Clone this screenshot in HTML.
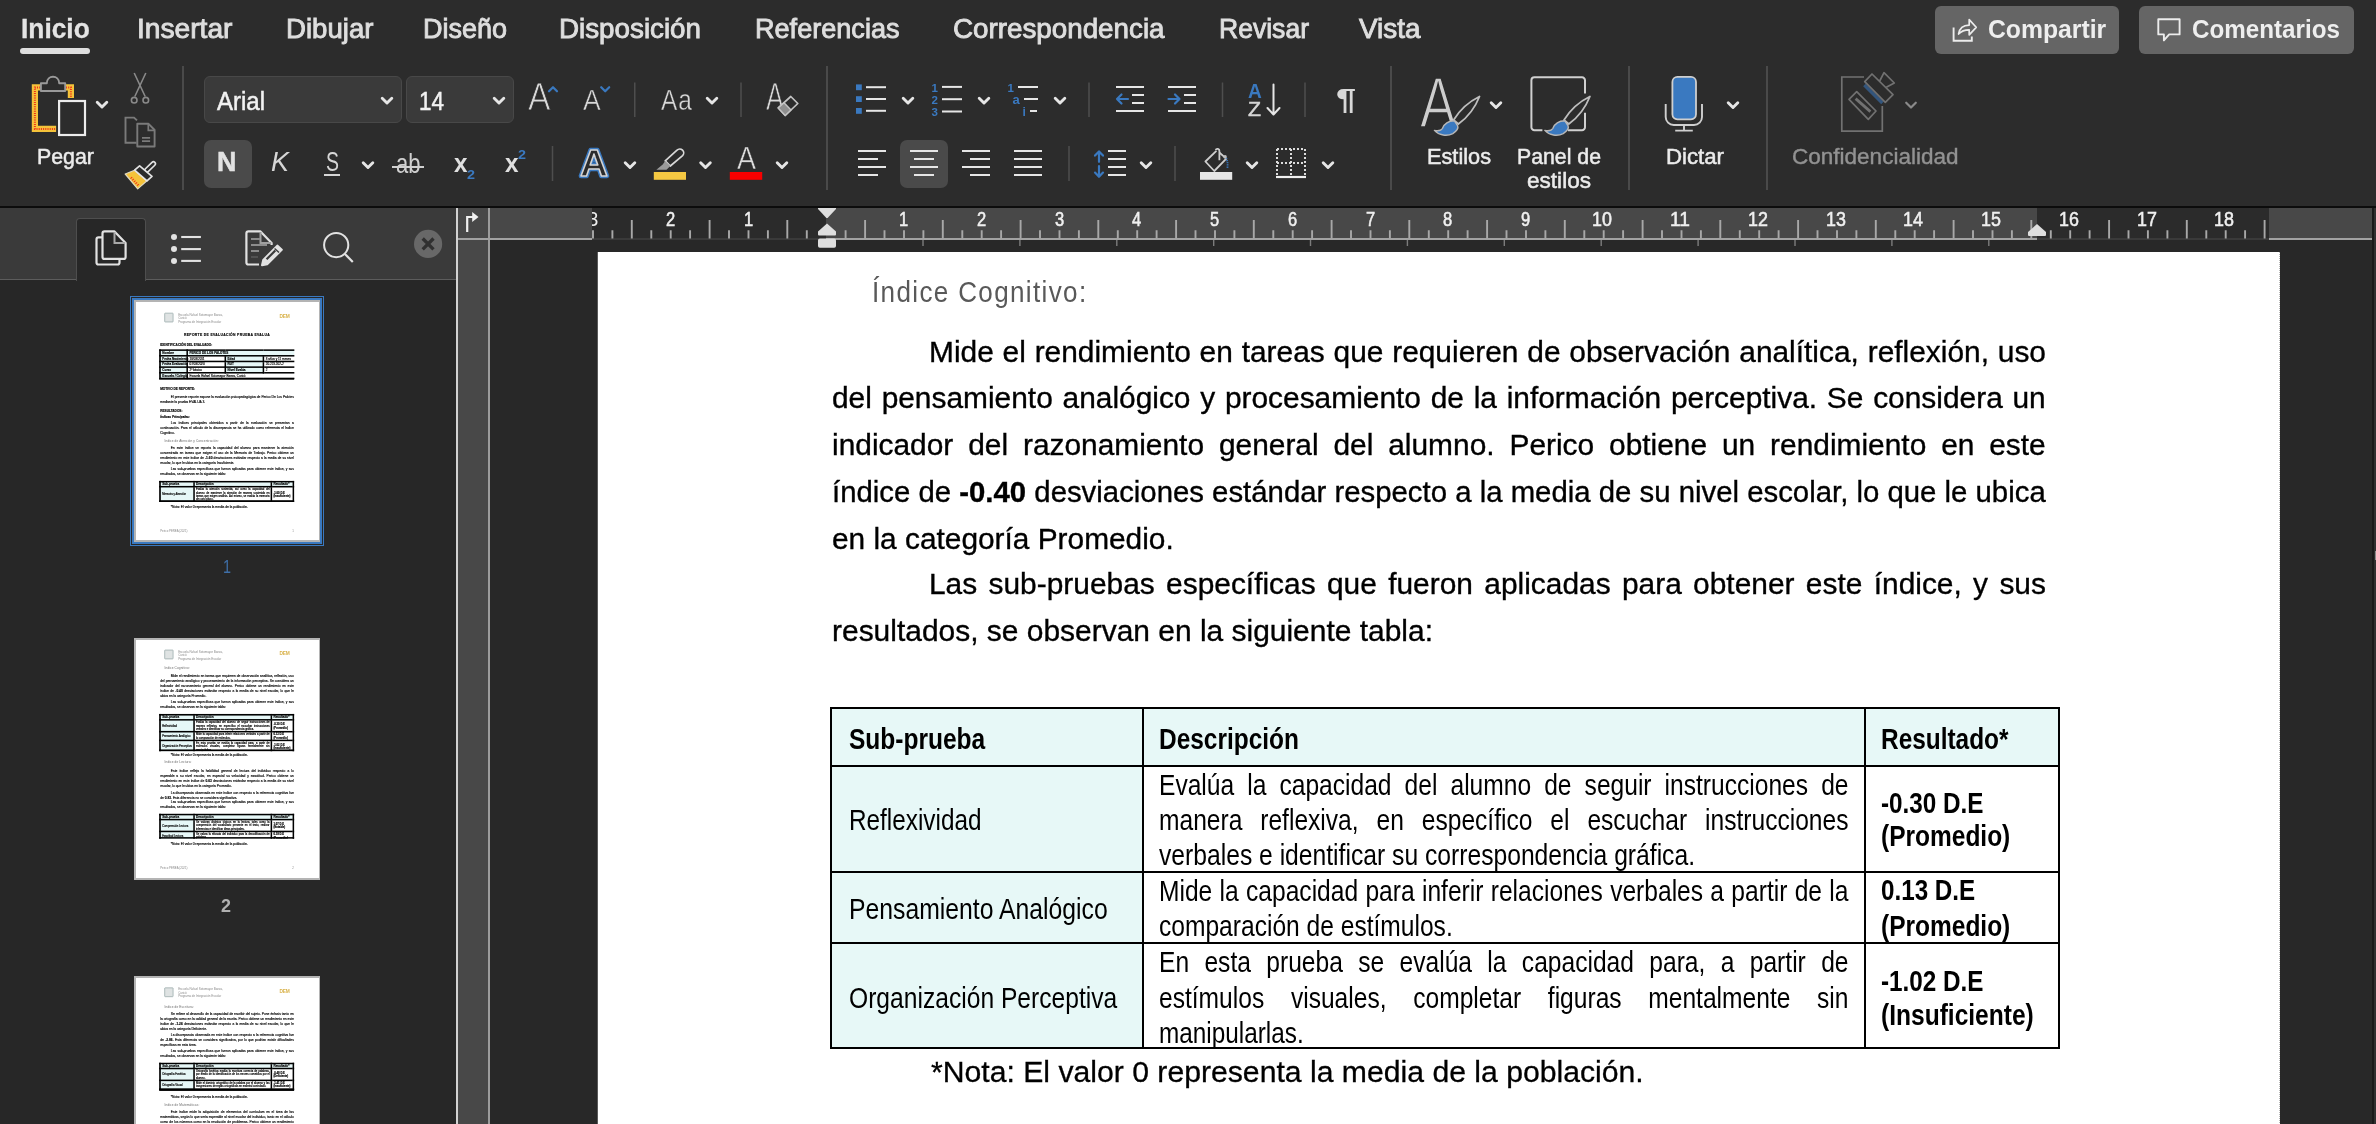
<!DOCTYPE html>
<html lang="es"><head><meta charset="utf-8"><title>Documento</title>
<style>

*{box-sizing:border-box;margin:0;padding:0}
html,body{width:2376px;height:1124px;overflow:hidden;background:#262626}
body{font-family:"Liberation Sans",sans-serif;}
#app{position:relative;width:2376px;height:1124px;overflow:hidden;background:#262626;will-change:transform}
.t{position:absolute;white-space:nowrap;transform-origin:0 50%;}
.a{position:absolute}
.d{color:#000}
svg{position:absolute;overflow:visible}

.mp{position:absolute;left:0;top:0;width:1681px;height:2190px;transform:scale(0.1089);transform-origin:0 0;font-size:30px;line-height:46px;color:#000;text-align:justify;background:#fff;-webkit-text-stroke:1.2px #000}
.b{position:absolute;left:222px;width:1227px}
.b.p{text-indent:98px}
.b.h1{font-size:31px;letter-spacing:3px;text-align:center;font-weight:bold}
.b.h2{font-size:29px;font-weight:bold}
.b.it{font-style:italic}
.b.h3{font-size:29px;color:#6a6a6a;padding-left:40px;letter-spacing:1px;-webkit-text-stroke:0}
.b.mh{height:110px;color:#8a8a8a;font-size:27px;line-height:32px;text-align:left;-webkit-text-stroke:0}
.mh span{position:absolute;left:165px;top:6px}
.mh .lg{position:absolute;left:38px;top:4px;width:84px;height:88px;border:7px solid #9aa;border-radius:8px;background:#dfe3e3}
.mh .dm{position:absolute;right:40px;top:22px;font-size:44px;color:#d9b24a;letter-spacing:-2px}
.b.tb{left:212px;width:1242px}
.mt{border-collapse:collapse;table-layout:fixed;width:1242px;border:16px solid #000;font-size:28px;line-height:34px;text-align:left}
.mt th,.mt td{border:14px solid #000;padding:1px 12px;vertical-align:middle;white-space:nowrap}
.mt th{background:#e6f7f7;text-align:left;line-height:30px}
.mt .c1{background:#e6f7f7}
.mt td.c2{text-align:justify;line-height:31px;font-size:24.5px;white-space:normal;padding:1px 10px}
.mt .c3{font-weight:bold;font-size:25px;line-height:32px}
.mt .c1{font-size:25px}
.mt.id th,.mt.id td{line-height:30px;padding:6px 14px 2px}
.mt.id{border-bottom:none;width:1316px}
.cl{position:absolute;left:0;bottom:0;width:100%;height:16px;background:#000}
.b.mf{display:flex;justify-content:space-between;color:#888;font-size:26px;-webkit-text-stroke:0}

</style></head>
<body>
<div id="app">
<div class="a" style="left:0;top:0;width:2376px;height:207px;background:#2c2c2c"></div>
<div class="a" style="left:0;top:206px;width:2376px;height:2.2px;background:#0c0c0c"></div>
<div class="a" style="left:20px;top:48px;width:70px;height:6px;border-radius:3px;background:#dedede"></div>
<div class="t" style="left:20.75px;top:10.71px;line-height:36px;font-size:27.4px;font-weight:bold;font-style:normal;letter-spacing:0px;color:#e4e4e4;-webkit-text-stroke:0.3px #e4e4e4;transform:scaleX(0.9611);">Inicio</div>
<div class="t" style="left:137.00px;top:10.71px;line-height:36px;font-size:27.4px;font-weight:normal;font-style:normal;letter-spacing:0px;color:#dedede;-webkit-text-stroke:0.9px #dedede;transform:scaleX(1.0284);">Insertar</div>
<div class="t" style="left:285.50px;top:10.71px;line-height:36px;font-size:27.4px;font-weight:normal;font-style:normal;letter-spacing:0px;color:#dedede;-webkit-text-stroke:0.9px #dedede;transform:scaleX(1.0083);">Dibujar</div>
<div class="t" style="left:423.00px;top:10.71px;line-height:36px;font-size:27.4px;font-weight:normal;font-style:normal;letter-spacing:0px;color:#dedede;-webkit-text-stroke:0.9px #dedede;transform:scaleX(0.9852);">Diseño</div>
<div class="t" style="left:559.00px;top:10.71px;line-height:36px;font-size:27.4px;font-weight:normal;font-style:normal;letter-spacing:0px;color:#dedede;-webkit-text-stroke:0.9px #dedede;transform:scaleX(1.0138);">Disposición</div>
<div class="t" style="left:755.00px;top:10.71px;line-height:36px;font-size:27.4px;font-weight:normal;font-style:normal;letter-spacing:0px;color:#dedede;-webkit-text-stroke:0.9px #dedede;transform:scaleX(0.9887);">Referencias</div>
<div class="t" style="left:953.00px;top:10.71px;line-height:36px;font-size:27.4px;font-weight:normal;font-style:normal;letter-spacing:0px;color:#dedede;-webkit-text-stroke:0.9px #dedede;transform:scaleX(1.0139);">Correspondencia</div>
<div class="t" style="left:1219.00px;top:10.71px;line-height:36px;font-size:27.4px;font-weight:normal;font-style:normal;letter-spacing:0px;color:#dedede;-webkit-text-stroke:0.9px #dedede;transform:scaleX(0.9692);">Revisar</div>
<div class="t" style="left:1359.00px;top:10.71px;line-height:36px;font-size:27.4px;font-weight:normal;font-style:normal;letter-spacing:0px;color:#dedede;-webkit-text-stroke:0.9px #dedede;transform:scaleX(1.0181);">Vista</div>
<div class="a" style="left:1935px;top:6px;width:184px;height:48px;border-radius:6px;background:#656565"></div>
<div class="a" style="left:2139px;top:6px;width:215px;height:48px;border-radius:6px;background:#656565"></div>
<div class="t" style="left:1987.75px;top:12.66px;line-height:33px;font-size:25.5px;font-weight:bold;font-style:normal;letter-spacing:0px;color:#eeeeee;transform:scaleX(0.9704);">Compartir</div>
<div class="t" style="left:2192.00px;top:12.66px;line-height:33px;font-size:25.5px;font-weight:bold;font-style:normal;letter-spacing:0px;color:#eeeeee;transform:scaleX(0.9495);">Comentarios</div>
<div class="t" style="left:37.00px;top:141.88px;line-height:29px;font-size:22px;font-weight:normal;font-style:normal;letter-spacing:0px;color:#ececec;-webkit-text-stroke:0.5px #ececec;transform:scaleX(0.9707);">Pegar</div>
<div class="t" style="left:1427.00px;top:141.88px;line-height:29px;font-size:22px;font-weight:normal;font-style:normal;letter-spacing:0px;color:#ececec;-webkit-text-stroke:0.5px #ececec;transform:scaleX(0.9877);">Estilos</div>
<div class="t" style="left:1517.00px;top:141.88px;line-height:29px;font-size:22px;font-weight:normal;font-style:normal;letter-spacing:0px;color:#ececec;-webkit-text-stroke:0.5px #ececec;transform:scaleX(0.9671);">Panel de</div>
<div class="t" style="left:1527.00px;top:165.88px;line-height:29px;font-size:22px;font-weight:normal;font-style:normal;letter-spacing:0px;color:#ececec;-webkit-text-stroke:0.5px #ececec;transform:scaleX(1.0263);">estilos</div>
<div class="t" style="left:1666.00px;top:141.88px;line-height:29px;font-size:22px;font-weight:normal;font-style:normal;letter-spacing:0px;color:#ececec;-webkit-text-stroke:0.5px #ececec;transform:scaleX(1.0095);">Dictar</div>
<div class="t" style="left:1791.50px;top:141.88px;line-height:29px;font-size:22px;font-weight:normal;font-style:normal;letter-spacing:0px;color:#929292;-webkit-text-stroke:0.4px #929292;transform:scaleX(1.0235);">Confidencialidad</div>
<div class="a" style="left:204px;top:76px;width:198px;height:47px;border-radius:6px;background:#3a3a3a;border:1px solid #484848"></div>
<div class="a" style="left:406px;top:76px;width:108px;height:47px;border-radius:6px;background:#3a3a3a;border:1px solid #484848"></div>
<div class="t" style="left:217.00px;top:84.66px;line-height:33px;font-size:25.5px;font-weight:normal;font-style:normal;letter-spacing:0px;color:#f2f2f2;-webkit-text-stroke:0.5px #f2f2f2;transform:scaleX(0.9409);">Arial</div>
<div class="t" style="left:419.00px;top:84.66px;line-height:33px;font-size:25.5px;font-weight:normal;font-style:normal;letter-spacing:0px;color:#f2f2f2;-webkit-text-stroke:0.5px #f2f2f2;transform:scaleX(0.8811);">14</div>
<div class="a" style="left:204px;top:140.2px;width:48px;height:47.5px;border-radius:7px;background:#4a4a4a"></div>
<div class="a" style="left:900px;top:140.2px;width:48px;height:47.5px;border-radius:7px;background:#4a4a4a"></div>
<div class="t" style="left:217.30px;top:143.22px;line-height:37px;font-size:28.5px;font-weight:bold;font-style:normal;letter-spacing:0px;color:#e2e2e2;-webkit-text-stroke:0.5px #e2e2e2;transform:scaleX(0.9420);">N</div>
<div class="t" style="left:271.00px;top:144.30px;line-height:36px;font-size:28px;font-weight:normal;font-style:italic;letter-spacing:0px;color:#d6d6d6;transform:scaleX(0.9632);">K</div>
<div class="t" style="left:325.50px;top:144.30px;line-height:36px;font-size:28px;font-weight:normal;font-style:normal;letter-spacing:0px;color:#d6d6d6;transform:scaleX(0.6957);">S</div>
<div class="a" style="left:324px;top:174px;width:16px;height:2px;background:#d6d6d6"></div>
<div class="t" style="left:396.00px;top:144.92px;line-height:37px;font-size:28.5px;font-weight:normal;font-style:normal;letter-spacing:0px;color:#d0d0d0;transform:scaleX(0.7728);">ab</div>
<div class="a" style="left:392px;top:165.6px;width:32px;height:2px;background:#d0d0d0"></div>
<div class="t" style="left:454.00px;top:147.06px;line-height:33px;font-size:25.5px;font-weight:bold;font-style:normal;letter-spacing:0px;color:#e0e0e0;transform:scaleX(0.9515);">x</div>
<div class="t" style="left:466.50px;top:165.82px;line-height:18px;font-size:13.5px;font-weight:bold;font-style:normal;letter-spacing:0px;color:#3a79c0;transform:scaleX(1.0644);">2</div>
<div class="t" style="left:505.00px;top:147.06px;line-height:33px;font-size:25.5px;font-weight:bold;font-style:normal;letter-spacing:0px;color:#e0e0e0;transform:scaleX(0.9515);">x</div>
<div class="t" style="left:518.00px;top:146.32px;line-height:18px;font-size:13.5px;font-weight:bold;font-style:normal;letter-spacing:0px;color:#3a79c0;transform:scaleX(1.0644);">2</div>
<div class="t" style="left:527.80px;top:72.53px;line-height:49px;font-size:38px;font-weight:normal;font-style:normal;letter-spacing:0px;color:#d8d8d8;-webkit-text-stroke:0.8px #2c2c2c;transform:scaleX(0.8872);">A</div>
<div class="t" style="left:583.10px;top:81.15px;line-height:38px;font-size:29px;font-weight:normal;font-style:normal;letter-spacing:0px;color:#d8d8d8;-webkit-text-stroke:0.5px #2c2c2c;transform:scaleX(0.9150);">A</div>
<div class="t" style="left:660.80px;top:81.15px;line-height:38px;font-size:29px;font-weight:normal;font-style:normal;letter-spacing:1px;color:#d8d8d8;-webkit-text-stroke:0.4px #2c2c2c;transform:scaleX(0.8430);">Aa</div>
<div class="t" style="left:766.00px;top:72.53px;line-height:49px;font-size:38px;font-weight:normal;font-style:normal;letter-spacing:0px;color:#d8d8d8;-webkit-text-stroke:0.8px #2c2c2c;transform:scaleX(0.7059);">A</div>
<div class="t" style="left:736.50px;top:138.29px;line-height:41px;font-size:31.5px;font-weight:normal;font-style:normal;letter-spacing:0px;color:#dcdcdc;-webkit-text-stroke:0.5px #2c2c2c;transform:scaleX(0.9041);">A</div>
<div class="t" style="left:1419.60px;top:58.44px;line-height:91px;font-size:70px;font-weight:normal;font-style:normal;letter-spacing:0px;color:#cdcdcd;-webkit-text-stroke:1.7px #2c2c2c;transform:scaleX(0.7751);">A</div>
<div class="t" style="left:1248.20px;top:78.51px;line-height:25px;font-size:19.3px;font-weight:bold;font-style:normal;letter-spacing:0px;color:#3a79c0;transform:scaleX(0.9901);">A</div>
<div class="t" style="left:1248.00px;top:95.57px;line-height:26px;font-size:20px;font-weight:normal;font-style:normal;letter-spacing:0px;color:#d6d6d6;-webkit-text-stroke:0.5px #d6d6d6;transform:scaleX(1.0639);">Z</div>
<div class="t" style="left:1335.90px;top:79.17px;line-height:39px;font-size:29.8px;font-weight:bold;font-style:normal;letter-spacing:0px;color:#d8d8d8;transform:scaleX(1.2124);">¶</div>
<svg width="2376" height="206" viewBox="0 0 2376 206" style="left:0;top:0">
<path d="M183 66V190" stroke="#555" stroke-width="1.5"/>
<path d="M827 66V190" stroke="#555" stroke-width="1.5"/>
<path d="M1391 66V190" stroke="#555" stroke-width="1.5"/>
<path d="M1629 66V190" stroke="#555" stroke-width="1.5"/>
<path d="M1767 66V190" stroke="#555" stroke-width="1.5"/>
<path d="M634.75 82.5V117" stroke="#4e4e4e" stroke-width="1.5"/>
<path d="M741 82.5V117" stroke="#4e4e4e" stroke-width="1.5"/>
<path d="M1089 82.5V117" stroke="#4e4e4e" stroke-width="1.5"/>
<path d="M1222.5 82.5V117" stroke="#4e4e4e" stroke-width="1.5"/>
<path d="M1305 82.5V117" stroke="#4e4e4e" stroke-width="1.5"/>
<path d="M552.5 146V181" stroke="#4e4e4e" stroke-width="1.5"/>
<path d="M1069 146V181" stroke="#4e4e4e" stroke-width="1.5"/>
<path d="M1175 146V181" stroke="#4e4e4e" stroke-width="1.5"/>
<path d="M97.2 102.2 L102.0 107.0 L106.8 102.2" fill="none" stroke="#e6e6e6" stroke-width="2.9" stroke-linecap="round" stroke-linejoin="round"/>
<path d="M382.2 98.2 L387.0 103.0 L391.8 98.2" fill="none" stroke="#e6e6e6" stroke-width="2.9" stroke-linecap="round" stroke-linejoin="round"/>
<path d="M494.2 98.2 L499.0 103.0 L503.8 98.2" fill="none" stroke="#e6e6e6" stroke-width="2.9" stroke-linecap="round" stroke-linejoin="round"/>
<path d="M707.2 98.2 L712.0 103.0 L716.8 98.2" fill="none" stroke="#e6e6e6" stroke-width="2.9" stroke-linecap="round" stroke-linejoin="round"/>
<path d="M903.2 98.2 L908.0 103.0 L912.8 98.2" fill="none" stroke="#e6e6e6" stroke-width="2.9" stroke-linecap="round" stroke-linejoin="round"/>
<path d="M979.2 98.2 L984.0 103.0 L988.8 98.2" fill="none" stroke="#e6e6e6" stroke-width="2.9" stroke-linecap="round" stroke-linejoin="round"/>
<path d="M1055.2 98.2 L1060.0 103.0 L1064.8 98.2" fill="none" stroke="#e6e6e6" stroke-width="2.9" stroke-linecap="round" stroke-linejoin="round"/>
<path d="M363.2 162.7 L368.0 167.5 L372.8 162.7" fill="none" stroke="#e6e6e6" stroke-width="2.9" stroke-linecap="round" stroke-linejoin="round"/>
<path d="M625.2 162.7 L630.0 167.5 L634.8 162.7" fill="none" stroke="#e6e6e6" stroke-width="2.9" stroke-linecap="round" stroke-linejoin="round"/>
<path d="M700.7 162.7 L705.5 167.5 L710.3 162.7" fill="none" stroke="#e6e6e6" stroke-width="2.9" stroke-linecap="round" stroke-linejoin="round"/>
<path d="M777.2 162.7 L782.0 167.5 L786.8 162.7" fill="none" stroke="#e6e6e6" stroke-width="2.9" stroke-linecap="round" stroke-linejoin="round"/>
<path d="M1141.2 162.7 L1146.0 167.5 L1150.8 162.7" fill="none" stroke="#e6e6e6" stroke-width="2.9" stroke-linecap="round" stroke-linejoin="round"/>
<path d="M1247.2 162.7 L1252.0 167.5 L1256.8 162.7" fill="none" stroke="#e6e6e6" stroke-width="2.9" stroke-linecap="round" stroke-linejoin="round"/>
<path d="M1323.2 162.7 L1328.0 167.5 L1332.8 162.7" fill="none" stroke="#e6e6e6" stroke-width="2.9" stroke-linecap="round" stroke-linejoin="round"/>
<path d="M1491.2 102.7 L1496.0 107.5 L1500.8 102.7" fill="none" stroke="#e6e6e6" stroke-width="2.9" stroke-linecap="round" stroke-linejoin="round"/>
<path d="M1728.2 102.7 L1733.0 107.5 L1737.8 102.7" fill="none" stroke="#e6e6e6" stroke-width="2.9" stroke-linecap="round" stroke-linejoin="round"/>
<path d="M1906.2 102.7 L1911.0 107.5 L1915.8 102.7" fill="none" stroke="#8a8a8a" stroke-width="2.2" stroke-linecap="round" stroke-linejoin="round"/>
<path d="M40.2 87.4H34.9V128.9H56.1" fill="none" stroke="#f5c33a" stroke-width="6.2"/>
<path d="M66 87.4H70.9V98" fill="none" stroke="#f5c33a" stroke-width="6.2"/>
<path d="M40.2 87.4H34.9V128.9H56.1M66 87.4H70.9V98" fill="none" stroke="#f0301a" stroke-width="2" stroke-dasharray="1 1.2"/>
<path d="M40.9 91V83.3H46.8C46.8 74.6 59.2 74.6 59.2 83.3H65.2V91Z" fill="#2c2c2c" stroke="#9a9a9a" stroke-width="1.9" stroke-linejoin="round"/>
<rect x="59.1" y="101" width="25.9" height="34" fill="#2c2c2c" stroke="#ececec" stroke-width="2.2"/>
<path d="M134.2 73L145.2 96.5M145.8 73L134.8 96.5" stroke="#8a8a8a" stroke-width="1.6" fill="none"/>
<circle cx="134.2" cy="100.2" r="2.8" fill="none" stroke="#8a8a8a" stroke-width="1.6"/><circle cx="145.8" cy="100.2" r="2.8" fill="none" stroke="#8a8a8a" stroke-width="1.6"/>
<path d="M136.5 142.8H125.5V117.6H134L137 120.4" fill="none" stroke="#7a7a7a" stroke-width="1.9"/>
<path d="M137.3 123.8H148.6L154.6 130V146.5H137.3Z" fill="#2c2c2c" stroke="#7a7a7a" stroke-width="1.9" stroke-linejoin="round"/>
<path d="M148.3 124V130.4H154.4" fill="none" stroke="#7a7a7a" stroke-width="1.7"/>
<path d="M142 137.8H150.1M142 141.2H150.1" stroke="#7a7a7a" stroke-width="1.7"/>
<path d="M146.8 170.2L153.4 163.8" stroke="#e4e4e4" stroke-width="5.6" stroke-linecap="round"/>
<path d="M146.8 170.2L153.4 163.8" stroke="#2c2c2c" stroke-width="2.4" stroke-linecap="round"/>
<path d="M125.2 174L137.7 188.9L147 180.8L134.6 170.2Z" fill="#f5c33a" stroke="#e0d9c0" stroke-width="1.2" stroke-linejoin="round"/>
<path d="M131 177.5L138.5 185.5" stroke="#f0301a" stroke-width="2.4" stroke-dasharray="1 1.4"/>
<path d="M134.6 170.2L139.6 165.9L152 176.4L147 180.8Z" fill="#2c2c2c" stroke="#e4e4e4" stroke-width="1.7" stroke-linejoin="round"/>
<path d="M549 91.3L553 87.2L557 91.3" fill="none" stroke="#3a79c0" stroke-width="2.2" stroke-linecap="round" stroke-linejoin="round"/>
<path d="M601.2 87.2L605.2 91.3L609.2 87.2" fill="none" stroke="#3a79c0" stroke-width="2.2" stroke-linecap="round" stroke-linejoin="round"/>
<path d="M778.2 107.9L790.8 96.5L797.8 103.5L785.2 115.5Z" fill="#2c2c2c" stroke="#c4c4c4" stroke-width="1.7" stroke-linejoin="round"/>
<path d="M778.2 107.9L784 102.7L791 109.9L785.2 115.5Z" fill="#8e8e8e" stroke="#c4c4c4" stroke-width="1.4" stroke-linejoin="round"/>
<text x="580" y="176.3" font-family="Liberation Sans,sans-serif" font-weight="bold" font-size="37" fill="#2c2c2c" stroke="#3a79c0" stroke-width="4.4" stroke-linejoin="round" textLength="28" lengthAdjust="spacingAndGlyphs">A</text>
<text x="580" y="176.3" font-family="Liberation Sans,sans-serif" font-weight="bold" font-size="37" fill="#2c2c2c" stroke="#d4d4d4" stroke-width="1.5" stroke-linejoin="round" textLength="28" lengthAdjust="spacingAndGlyphs">A</text>
<rect x="653.8" y="172" width="32.2" height="7.8" fill="#f5c842"/>
<path d="M665.2 160.9L677 150.2A3.8 3.8 0 0 1 682.6 155.6L670.3 166Z" fill="none" stroke="#d8d8d8" stroke-width="1.7" stroke-linejoin="round"/>
<path d="M665.2 160.9L670.3 166L666.5 169.7H656.4L662.7 164.5Z" fill="#9a9a9a"/>
<rect x="729.8" y="172" width="32.4" height="7.8" fill="#f80000"/>
<rect x="856" y="84.4" width="5.8" height="5.8" fill="#3a79c0"/>
<path d="M866 87.2H886" stroke="#e6e6e6" stroke-width="2"/>
<rect x="856" y="96.2" width="5.8" height="5.8" fill="#3a79c0"/>
<path d="M866 99H886" stroke="#e6e6e6" stroke-width="2"/>
<rect x="856" y="108.0" width="5.8" height="5.8" fill="#3a79c0"/>
<path d="M866 110.8H886" stroke="#e6e6e6" stroke-width="2"/>
<text x="931.5" y="91.7" font-family="Liberation Sans,sans-serif" font-weight="bold" font-size="11.5" fill="#3a79c0">1</text>
<path d="M942 86.9H962" stroke="#e6e6e6" stroke-width="2"/>
<text x="931.5" y="104.0" font-family="Liberation Sans,sans-serif" font-weight="bold" font-size="11.5" fill="#3a79c0">2</text>
<path d="M942 99.2H962" stroke="#e6e6e6" stroke-width="2"/>
<text x="931.5" y="116.3" font-family="Liberation Sans,sans-serif" font-weight="bold" font-size="11.5" fill="#3a79c0">3</text>
<path d="M942 111.5H962" stroke="#e6e6e6" stroke-width="2"/>
<text x="1007.5" y="91.5" font-family="Liberation Sans,sans-serif" font-weight="bold" font-size="11.5" fill="#3a79c0">1</text>
<text x="1012.5" y="104" font-family="Liberation Sans,sans-serif" font-weight="bold" font-size="13" fill="#3a79c0">a</text>
<text x="1022.5" y="116" font-family="Liberation Sans,sans-serif" font-weight="bold" font-size="12" fill="#3a79c0">i</text>
<path d="M1018 87H1038M1024 99H1038M1030 111H1037" stroke="#e6e6e6" stroke-width="2"/>
<path d="M1116 87H1144M1132 95H1144M1132 103H1144M1116 111H1144" stroke="#e6e6e6" stroke-width="2"/>
<path d="M1128 99H1117M1121.5 94.5L1117 99L1121.5 103.5" fill="none" stroke="#3a79c0" stroke-width="2.2" stroke-linecap="round" stroke-linejoin="round"/>
<path d="M1168 87H1196M1184 95H1196M1184 103H1196M1168 111H1196" stroke="#e6e6e6" stroke-width="2"/>
<path d="M1168.5 99H1179.5M1175 94.5L1179.5 99L1175 103.5" fill="none" stroke="#3a79c0" stroke-width="2.2" stroke-linecap="round" stroke-linejoin="round"/>
<path d="M1273.5 84.5V114M1267.5 108L1273.5 114.5L1279.5 108" fill="none" stroke="#e6e6e6" stroke-width="2" stroke-linecap="round" stroke-linejoin="round"/>
<path d="M858 151H886" stroke="#e6e6e6" stroke-width="2"/><path d="M858 159H878" stroke="#e6e6e6" stroke-width="2"/><path d="M858 167H886" stroke="#e6e6e6" stroke-width="2"/><path d="M858 175H878" stroke="#e6e6e6" stroke-width="2"/>
<path d="M910 151H938" stroke="#e6e6e6" stroke-width="2"/><path d="M914 159H934" stroke="#e6e6e6" stroke-width="2"/><path d="M910 167H938" stroke="#e6e6e6" stroke-width="2"/><path d="M914 175H934" stroke="#e6e6e6" stroke-width="2"/>
<path d="M962 151H990" stroke="#e6e6e6" stroke-width="2"/><path d="M970 159H990" stroke="#e6e6e6" stroke-width="2"/><path d="M962 167H990" stroke="#e6e6e6" stroke-width="2"/><path d="M970 175H990" stroke="#e6e6e6" stroke-width="2"/>
<path d="M1014 151H1042" stroke="#e6e6e6" stroke-width="2"/><path d="M1014 159H1042" stroke="#e6e6e6" stroke-width="2"/><path d="M1014 167H1042" stroke="#e6e6e6" stroke-width="2"/><path d="M1014 175H1042" stroke="#e6e6e6" stroke-width="2"/>
<path d="M1108 151H1126" stroke="#e6e6e6" stroke-width="2"/><path d="M1108 159H1126" stroke="#e6e6e6" stroke-width="2"/><path d="M1108 167H1126" stroke="#e6e6e6" stroke-width="2"/><path d="M1108 175H1126" stroke="#e6e6e6" stroke-width="2"/>
<path d="M1099 151.8V161.8M1095 155.6L1099 151.4L1103 155.6M1099 166.2V176.4M1095 172.6L1099 176.8L1103 172.6" fill="none" stroke="#3a79c0" stroke-width="2.2" stroke-linecap="round" stroke-linejoin="round"/>
<rect x="1200" y="172" width="32.2" height="7.8" fill="#e6e6e6"/>
<path d="M1216.4 150.8L1205.4 161.5L1214.3 171L1226.3 158.6L1219.6 152.8" fill="none" stroke="#cfcfcf" stroke-width="1.8" stroke-linejoin="round"/>
<path d="M1219.4 160.3V151A2 2 0 0 0 1215.6 150" fill="none" stroke="#cfcfcf" stroke-width="1.8"/>
<path d="M1224.6 156.3C1227.3 158.5 1228 163 1227.4 167.8" fill="none" stroke="#3a79c0" stroke-width="1.8" stroke-dasharray="1.2 1"/>
<circle cx="1225" cy="156.8" r="1.8" fill="#bfbfbf"/>
<path d="M1277 149H1305M1277 163H1305M1277 149V177M1291 149V177M1305 149V177" fill="none" stroke="#dcdcdc" stroke-width="2" stroke-dasharray="2 2"/>
<path d="M1276 177H1306" stroke="#f0f0f0" stroke-width="2.2"/>
<path d="M1453.6 120Q1463.0 104.6 1479.5 96.5Q1472.8 113.6 1458.4 124Z" fill="#2c2c2c" stroke="#bebebe" stroke-width="1.8" stroke-linejoin="round"/><path d="M1454.4 120.8C1447.0 121 1444.0 124.5 1442.4 128.5C1441.0 131 1438.0 131 1434.4 130.4C1439.0 135.5 1447.0 136.5 1452.8 133.6C1457.0 131 1458.5 128 1457.6 125.6Z" fill="#3a79c0" stroke="#b8b8b8" stroke-width="1.4" stroke-linejoin="round"/>
<path d="M1585 93.6V80.3A3 3 0 0 0 1582 77.3H1534.4A3 3 0 0 0 1531.4 80.3V127.2A3 3 0 0 0 1534.4 130.2H1542.4M1568 130.2H1582A3 3 0 0 0 1585 127.2V112.8" fill="none" stroke="#d0d0d0" stroke-width="2"/>
<path d="M1564.0 120Q1573.4 104.6 1589.9 96.5Q1583.2 113.6 1568.8 124Z" fill="#2c2c2c" stroke="#bebebe" stroke-width="1.8" stroke-linejoin="round"/><path d="M1564.8 120.8C1557.4 121 1554.4 124.5 1552.8 128.5C1551.4 131 1548.4 131 1544.8 130.4C1549.4 135.5 1557.4 136.5 1563.2 133.6C1567.4 131 1568.9 128 1568.0 125.6Z" fill="#3a79c0" stroke="#b8b8b8" stroke-width="1.4" stroke-linejoin="round"/>
<rect x="1672.4" y="76.9" width="23.6" height="42.4" rx="5" fill="#3a79c0" stroke="#cfcfcf" stroke-width="1.8"/>
<path d="M1665.7 104V117A8 8 0 0 0 1673.7 125H1694A8 8 0 0 0 1702 117V104" fill="none" stroke="#cfcfcf" stroke-width="1.9"/>
<path d="M1684 125V130.4M1675.2 130.6H1692.8" stroke="#cfcfcf" stroke-width="1.9"/>
<path d="M1864 77H1841.8V131.2H1882.3V106" fill="none" stroke="#717171" stroke-width="1.7"/>
<path d="M1856.7 91.7L1876 111L1868.3 119.3L1849 99.3Z" fill="none" stroke="#717171" stroke-width="1.7" stroke-linejoin="round"/>
<path d="M1855.6 98.6L1870.4 111.6" stroke="#717171" stroke-width="2.8"/>
<path d="M1864.4 85L1882.4 103" stroke="#3a79c0" stroke-opacity="0.55" stroke-width="3.4"/>
<path d="M1872 74L1893 94.7L1885.3 102.3L1864.7 81.7Z" fill="none" stroke="#717171" stroke-width="1.7" stroke-linejoin="round"/>
<path d="M1879.7 81L1884 72.7L1894.3 83L1886.3 87.3" fill="none" stroke="#717171" stroke-width="1.7" stroke-linejoin="round"/>
<path d="M1953.6 27.4V40.8H1971.8V36.4" fill="none" stroke="#ececec" stroke-width="1.9"/>
<path d="M1958.6 34C1959.5 28 1963.5 25.2 1969.2 25.1V19.6L1976.2 27.3L1969.2 34.8V29.8C1964.5 29.8 1961.3 31 1958.6 34Z" fill="none" stroke="#ececec" stroke-width="1.7" stroke-linejoin="round"/>
<path d="M2158.3 19.2H2179.6V34.4H2169.2L2163.9 40.4V34.4H2158.3Z" fill="none" stroke="#ececec" stroke-width="1.9" stroke-linejoin="round"/>
</svg>
<div class="a" style="left:0;top:208px;width:456px;height:916px;background:#272727"></div>
<div class="a" style="left:0;top:208px;width:456px;height:72px;background:#3a3a3a;border-bottom:1px solid #5c5c5c"></div>
<div class="a" style="left:75.5px;top:217.5px;width:70.5px;height:63px;background:#272727;border:1px solid #4e4e4e;border-bottom:none;border-radius:4px 4px 0 0"></div>
<div class="a" style="left:456px;top:208px;width:2.1px;height:916px;background:#d2d2d2"></div>
<div class="a" style="left:458px;top:208px;width:30px;height:916px;background:#484848"></div>
<div class="a" style="left:488px;top:208px;width:2.1px;height:916px;background:#9c9c9c"></div>
<svg width="500" height="80" viewBox="0 205 500 80" style="left:0;top:205px">
<path d="M102.5 237.4H98.5A2 2 0 0 0 96.5 239.4V262.5A2 2 0 0 0 98.5 264.5H117.5A2 2 0 0 0 119.5 262.5V259" fill="none" stroke="#e2e2e2" stroke-width="2.2"/>
<path d="M104.5 231.4H114.5L125.6 242.9V256.9A2 2 0 0 1 123.6 258.9H104.5A2 2 0 0 1 102.5 256.9V233.4A2 2 0 0 1 104.5 231.4Z" fill="none" stroke="#e2e2e2" stroke-width="2.2" stroke-linejoin="round"/>
<path d="M114.5 231.9V242.9H125.2" fill="none" stroke="#a8a8a8" stroke-width="2"/>
<circle cx="174" cy="237" r="3" fill="#e2e2e2"/><path d="M181.2 237H200.9" stroke="#e2e2e2" stroke-width="2.1"/>
<circle cx="174" cy="249.1" r="3" fill="#e2e2e2"/><path d="M181.2 249.1H200.9" stroke="#e2e2e2" stroke-width="2.1"/>
<circle cx="174" cy="260.9" r="3" fill="#e2e2e2"/><path d="M181.2 260.9H200.9" stroke="#e2e2e2" stroke-width="2.1"/>
<path d="M259 264.5H248.4A2 2 0 0 1 246.4 262.5V233.4A2 2 0 0 1 248.4 231.4H260.5L271.6 242.9V245" fill="none" stroke="#e2e2e2" stroke-width="2.2" stroke-linejoin="round"/>
<path d="M260.5 231.9V242.9H271.2" fill="none" stroke="#a0a0a0" stroke-width="2"/>
<path d="M251 239H260M251 245H267M251 251H259" stroke="#8c8c8c" stroke-width="1.8"/>
<path d="M251 257H258" stroke="#555" stroke-width="1.8"/>
<path d="M277.3 245.6L281.8 249.8L267.2 264.2L262 265.2L263.2 260Z" fill="#e2e2e2" stroke="#e2e2e2" stroke-width="2" stroke-linejoin="round"/>
<path d="M274.6 248.4L279 252.6" stroke="#3a3a3a" stroke-width="1.4"/>
<path d="M275.3 250.5L266.6 259.3" stroke="#3a3a3a" stroke-width="2.2"/>
<circle cx="336.2" cy="245.1" r="12.1" fill="none" stroke="#e2e2e2" stroke-width="2"/><path d="M344.9 253.9L352.8 261.9" stroke="#e2e2e2" stroke-width="2.2"/>
<circle cx="428.1" cy="243.9" r="14.1" fill="#686868"/><path d="M422.7 238.5L433.5 249.3M433.5 238.5L422.7 249.3" stroke="#303030" stroke-width="3.3"/>
<path d="M467.2 232V217H474" fill="none" stroke="#f0f0f0" stroke-width="2.2"/><path d="M472.2 212L478.5 217L472.2 222Z" fill="#f0f0f0"/>
</svg>
<div class="a" style="left:130px;top:296px;width:194px;height:249.5px;border:1px solid #3a79c0;background:#272727"></div>
<div class="a" style="left:132px;top:298px;width:190px;height:245.5px;border:2px solid #3a79c0;background:#b4b4b4"></div>
<div class="a" style="left:135.6px;top:301.6px;width:183px;height:238.4px;background:#fff;overflow:hidden"><div class="mp"><div class="b mh" style="top:95px;"><i class="lg"></i><span>Escuela Rafael Sotomayor Baeza,<br>Curicó<br>Programa de Integración Escolar</span><b class="dm">DEM</b></div><div class="b h1" style="top:278px;">REPORTE DE EVALUACIÓN PRUEBA EVALUA</div><div class="b h2" style="top:370px;">IDENTIFICACIÓN DEL EVALUADO:</div><div class="b tb" style="top:433px;height:282px;overflow:hidden;"><table class="mt id"><tr><th style="width:250px">Nombre</th><th colspan="3">PERICO DE LOS PALOTES</th></tr><tr><th>Fecha Nacimiento</th><td style="width:330px">18/03/2011</td><th style="width:170px">Edad</th><td>8 años y 11 meses</td></tr><tr><th>Fecha Evaluación</th><td>07/03/2020</td><th>RUT</th><td>20.223.202-2</td></tr><tr><th>Curso</th><td>2º básico</td><th>Nivel Evalúa</th><td>2</td></tr><tr><th>Escuela / Colegio</th><td colspan="3">Escuela Rafael Sotomayor Baeza, Curicó</td></tr></table><i class="cl"></i></div><div class="b h2" style="top:775px;">MOTIVO DE REPORTE:</div><div class="b p" style="top:846px;">El presente reporte expone la evaluación psicopedagógica de Perico De Los Palotes mediante la prueba EVALUA 3.</div><div class="b h2" style="top:974px;">RESULTADOS:</div><div class="b h2 it" style="top:1031px;">Índices Principales:</div><div class="b p" style="top:1085px;">Los índices principales obtenidos a partir de la evaluación se presentan a continuación. Para el cálculo de la discrepancia se ha utilizado como referencia el Índice Cognitivo.</div><div class="b h3" style="top:1251px;">Índice de Atención y Concentración:</div><div class="b p" style="top:1321px;">En este índice se reporta la capacidad del alumno para mantener la atención concentrada en tareas que exigen el uso de la Memoria de Trabajo. Perico obtiene un rendimiento en este índice de <b>-1.60</b> desviaciones estándar respecto a la media de su nivel escolar, lo que le ubica en la categoría Insuficiente.</div><div class="b p" style="top:1509px;">Las sub-pruebas específicas que fueron aplicadas para obtener este índice, y sus resultados, se observan en la siguiente tabla:</div><div class="b tb" style="top:1641px;height:195px;overflow:hidden;"><table class="mt"><tr><th style="width:313px">Sub-prueba</th><th>Descripción</th><th style="width:203px">Resultado*</th></tr><tr><td class="c1">Memoria y Atención</td><td class="c2">Evalúa la atención sostenida, así como la capacidad del alumno de mantener la atención de manera sostenida en tareas que exigen análisis. Así mismo, se evalúa la memoria de corto plazo.</td><td class="c3">-1.60 D.E<br>(Insuficiente)</td></tr></table><i class="cl"></i></div><div class="b p" style="top:1859px;">*Nota: El valor 0 representa la media de la población.</div><div class="b mf" style="top:2077px;"><span>Perico PEREA (2021)</span><span>1</span></div></div></div>
<div class="a" style="left:133.8px;top:637.8px;width:186.5px;height:241.9px;background:#b4b4b4"></div>
<div class="a" style="left:135.6px;top:639.6px;width:183px;height:238.4px;background:#fff;overflow:hidden"><div class="mp"><div class="b mh" style="top:85px;"><i class="lg"></i><span>Escuela Rafael Sotomayor Baeza,<br>Curicó<br>Programa de Integración Escolar</span><b class="dm">DEM</b></div><div class="b h3" style="top:236px;">Índice Cognitivo:</div><div class="b p" style="top:311px;">Mide el rendimiento en tareas que requieren de observación analítica, reflexión, uso del pensamiento analógico y procesamiento de la información perceptiva. Se considera un indicador del razonamiento general del alumno. Perico obtiene un rendimiento en este índice de <b>-0.40</b> desviaciones estándar respecto a la media de su nivel escolar, lo que le ubica en la categoría Promedio.</div><div class="b p" style="top:550px;">Las sub-pruebas específicas que fueron aplicadas para obtener este índice, y sus resultados, se observan en la siguiente tabla:</div><div class="b tb" style="top:678px;height:343px;overflow:hidden;"><table class="mt"><tr><th style="width:313px">Sub-prueba</th><th>Descripción</th><th style="width:203px">Resultado*</th></tr><tr><td class="c1">Reflexividad</td><td class="c2">Evalúa la capacidad del alumno de seguir instrucciones de manera reflexiva, en específico el escuchar instrucciones verbales e identificar su correspondencia gráfica.</td><td class="c3">-0.30 D.E<br>(Promedio)</td></tr><tr><td class="c1">Pensamiento Analógico</td><td class="c2">Mide la capacidad para inferir relaciones verbales a partir de la comparación de estímulos.</td><td class="c3">0.13 D.E<br>(Promedio)</td></tr><tr><td class="c1">Organización Perceptiva</td><td class="c2">En esta prueba se evalúa la capacidad para, a partir de estímulos visuales, completar figuras mentalmente sin manipularlas.</td><td class="c3">-1.02 D.E<br>(Insuficiente)</td></tr></table><i class="cl"></i></div><div class="b p" style="top:1029px;">*Nota: El valor 0 representa la media de la población.</div><div class="b h3" style="top:1100px;">Índice de Lectura:</div><div class="b p" style="top:1175px;">Este índice refleja la habilidad general de lectura del individuo respecto a lo esperable a su nivel escolar, en especial su velocidad y exactitud. Perico obtiene un rendimiento en este índice de <b>0.63</b> desviaciones estándar respecto a la media de su nivel escolar, lo que le ubica en la categoría Promedio.</div><div class="b p" style="top:1379px;">La discrepancia observada en este índice con respecto a la referencia cognitiva fue de <b>0.83</b>. Esta diferencia no se considera significativa.</div><div class="b p" style="top:1467px;">Las sub-pruebas específicas que fueron aplicadas para obtener este índice, y sus resultados, se observan en la siguiente tabla:</div><div class="b tb" style="top:1594px;height:232px;overflow:hidden;"><table class="mt"><tr><th style="width:313px">Sub-prueba</th><th>Descripción</th><th style="width:203px">Resultado*</th></tr><tr><td class="c1">Comprensión Lectora</td><td class="c2">Se valoran distintos tópicos en la lectura, tales como la comprensión del vocabulario presente en el texto, realizar inferencias e identificar ideas principales.</td><td class="c3">1.07 D.E<br>(Notable)</td></tr><tr><td class="c1">Exactitud Lectora</td><td class="c2">Se valora la eficacia del individuo para la decodificación de palabras.</td><td class="c3">0.19 D.E<br>(Promedio)</td></tr></table><i class="cl"></i></div><div class="b p" style="top:1853px;">*Nota: El valor 0 representa la media de la población.</div><div class="b mf" style="top:2071px;"><span>Perico PEREA (2021)</span><span>2</span></div></div></div>
<div class="a" style="left:133.8px;top:975.8px;width:186.5px;height:241.9px;background:#b4b4b4"></div>
<div class="a" style="left:135.6px;top:977.6px;width:183px;height:238.4px;background:#fff;overflow:hidden"><div class="mp"><div class="b mh" style="top:83px;"><i class="lg"></i><span>Escuela Rafael Sotomayor Baeza,<br>Curicó<br>Programa de Integración Escolar</span><b class="dm">DEM</b></div><div class="b h3" style="top:239px;">Índice de Escritura:</div><div class="b p" style="top:308px;">Se refiere al desarrollo de la capacidad de escribir del sujeto. Pone énfasis tanto en la ortografía como en la calidad general de la escrita. Perico obtiene un rendimiento en este índice de <b>-1.26</b> desviaciones estándar respecto a la media de su nivel escolar, lo que le ubica en la categoría Deficiente.</div><div class="b p" style="top:496px;">La discrepancia observada en este índice con respecto a la referencia cognitiva fue de <b>-2.86</b>. Esta diferencia se considera significativa, por lo que podrían existir dificultades específicas en esta área.</div><div class="b p" style="top:646px;">Las sub-pruebas específicas que fueron aplicadas para obtener este índice, y sus resultados, se observan en la siguiente tabla:</div><div class="b tb" style="top:776px;height:261px;overflow:hidden;"><table class="mt"><tr><th style="width:313px">Sub-prueba</th><th>Descripción</th><th style="width:203px">Resultado*</th></tr><tr><td class="c1">Ortografía Fonética</td><td class="c2">Ortografía fonética evalúa la escritura correcta de palabras, por medio de la identificación de los errores cometidos por el alumno.</td><td class="c3">-0.49 D.E<br>(Deficiente)</td></tr><tr><td class="c1">Ortografía Visual</td><td class="c2">Mide el dominio ortográfico de la palabra por el alumno y las trasgresiones de reglas ortográficas en material controlado.</td><td class="c3">-1.41 D.E<br>(Insuficiente)</td></tr></table><i class="cl"></i></div><div class="b p" style="top:1065px;">*Nota: El valor 0 representa la media de la población.</div><div class="b h3" style="top:1138px;">Índice de Matemáticas:</div><div class="b p" style="top:1211px;">Este índice mide la adquisición de elementos del currículum en el área de las matemáticas, según lo que sería esperable al nivel escolar del individuo, tanto en el cálculo como de los números como en la resolución de problemas. Perico obtiene un rendimiento en este índice de <b>-0.35</b> desviaciones estándar respecto a la media de su nivel escolar.</div></div></div>
<div class="t" style="left:222.50px;top:555.76px;line-height:23px;font-size:18px;font-weight:normal;font-style:normal;letter-spacing:0px;color:#3f6fa8;transform:scaleX(0.7988);">1</div>
<div class="t" style="left:221.00px;top:892.92px;line-height:25px;font-size:19px;font-weight:bold;font-style:normal;letter-spacing:0px;color:#b0b0b0;transform:scaleX(0.9453);">2</div>
<div class="a" style="left:490px;top:208px;width:1886px;height:916px;background:#282828"></div>
<div class="a" style="left:490px;top:208px;width:1882px;height:31px;background:#484848"></div>
<div class="a" style="left:592.2px;top:208px;width:234.3px;height:31px;background:#2b2b2b"></div>
<div class="a" style="left:2037px;top:208px;width:232px;height:31px;background:#2b2b2b"></div>
<div class="a" style="left:458px;top:238px;width:134.2px;height:2.2px;background:#a2a2a2"></div>
<div class="a" style="left:826px;top:238px;width:1211px;height:2.2px;background:#a2a2a2"></div>
<div class="a" style="left:2269px;top:238px;width:103px;height:2.2px;background:#a2a2a2"></div>
<div class="a" style="left:592.2px;top:238px;width:233.8px;height:2.2px;background:#3a3a3a"></div>
<div class="a" style="left:2037px;top:238px;width:232px;height:2.2px;background:#3a3a3a"></div>
<div class="a" style="left:2372px;top:208px;width:1.5px;height:916px;background:#1a1a1a"></div>
<div class="a" style="left:2373.5px;top:208px;width:2.5px;height:916px;background:#303030"></div>
<div class="a" style="left:2374.5px;top:551px;width:1.5px;height:9px;background:#8a8a8a"></div>
<svg width="2376" height="50" viewBox="0 205 2376 50" style="left:0;top:205px">
<path d="M593.0 230.2V238.5M612.4 230.2V238.5M631.8 220V238.5M651.3 230.2V238.5M670.7 230.2V238.5M690.1 230.2V238.5M709.6 220V238.5M729.0 230.2V238.5M748.5 230.2V238.5M767.9 230.2V238.5M787.3 220V238.5M806.8 230.2V238.5M845.6 230.2V238.5M865.1 220V238.5M884.5 230.2V238.5M904.0 230.2V238.5M923.4 230.2V238.5M942.8 220V238.5M962.3 230.2V238.5M981.7 230.2V238.5M1001.1 230.2V238.5M1020.6 220V238.5M1040.0 230.2V238.5M1059.5 230.2V238.5M1078.9 230.2V238.5M1098.3 220V238.5M1117.8 230.2V238.5M1137.2 230.2V238.5M1156.6 230.2V238.5M1176.1 220V238.5M1195.5 230.2V238.5M1215.0 230.2V238.5M1234.4 230.2V238.5M1253.8 220V238.5M1273.3 230.2V238.5M1292.7 230.2V238.5M1312.1 230.2V238.5M1331.6 220V238.5M1351.0 230.2V238.5M1370.5 230.2V238.5M1389.9 230.2V238.5M1409.3 220V238.5M1428.8 230.2V238.5M1448.2 230.2V238.5M1467.6 230.2V238.5M1487.1 220V238.5M1506.5 230.2V238.5M1526.0 230.2V238.5M1545.4 230.2V238.5M1564.8 220V238.5M1584.3 230.2V238.5M1603.7 230.2V238.5M1623.1 230.2V238.5M1642.6 220V238.5M1662.0 230.2V238.5M1681.5 230.2V238.5M1700.9 230.2V238.5M1720.3 220V238.5M1739.8 230.2V238.5M1759.2 230.2V238.5M1778.6 230.2V238.5M1798.1 220V238.5M1817.5 230.2V238.5M1837.0 230.2V238.5M1856.4 230.2V238.5M1875.8 220V238.5M1895.3 230.2V238.5M1914.7 230.2V238.5M1934.1 230.2V238.5M1953.6 220V238.5M1973.0 230.2V238.5M1992.5 230.2V238.5M2011.9 230.2V238.5M2031.3 220V238.5M2050.8 230.2V238.5M2070.2 230.2V238.5M2089.6 230.2V238.5M2109.1 220V238.5M2128.5 230.2V238.5M2147.9 230.2V238.5M2167.4 230.2V238.5M2186.8 220V238.5M2206.3 230.2V238.5M2225.7 230.2V238.5M2245.1 230.2V238.5M2264.6 220V238.5" stroke="#a8a8a8" stroke-width="1.9" fill="none"/>
<path d="M923.0 240V246M1019.9 240V246M1116.8 240V246M1213.7 240V246M1310.5 240V246M1407.4 240V246M1504.3 240V246M1601.2 240V246M1698.1 240V246M1795.0 240V246M1891.9 240V246M1988.8 240V246" stroke="#7c7c7c" stroke-width="1.4" fill="none"/>
<path d="M818 208.1H836V209L827.6 218H826.4L818 209Z" fill="#dedede"/>
<path d="M827 223.6L836 231.6V234.6A1 1 0 0 1 835 235.6H819A1 1 0 0 1 818 234.6V231.6Z" fill="#dedede"/>
<rect x="818" y="238.4" width="18" height="9.3" rx="1.8" fill="#dedede"/>
<path d="M2037 224L2046 232V235A1 1 0 0 1 2045 236H2029A1 1 0 0 1 2028 235V232Z" fill="#dedede"/>
</svg>
<div class="t" style="left:899.05px;top:206.74px;line-height:25px;font-size:19.5px;font-weight:normal;font-style:normal;letter-spacing:0px;color:#f0f0f0;-webkit-text-stroke:0.55px #f0f0f0;transform:scaleX(0.8472);">1</div>
<div class="t" style="left:976.80px;top:206.74px;line-height:25px;font-size:19.5px;font-weight:normal;font-style:normal;letter-spacing:0px;color:#f0f0f0;-webkit-text-stroke:0.55px #f0f0f0;transform:scaleX(0.8472);">2</div>
<div class="t" style="left:1054.55px;top:206.74px;line-height:25px;font-size:19.5px;font-weight:normal;font-style:normal;letter-spacing:0px;color:#f0f0f0;-webkit-text-stroke:0.55px #f0f0f0;transform:scaleX(0.8472);">3</div>
<div class="t" style="left:1132.30px;top:206.74px;line-height:25px;font-size:19.5px;font-weight:normal;font-style:normal;letter-spacing:0px;color:#f0f0f0;-webkit-text-stroke:0.55px #f0f0f0;transform:scaleX(0.8472);">4</div>
<div class="t" style="left:1210.05px;top:206.74px;line-height:25px;font-size:19.5px;font-weight:normal;font-style:normal;letter-spacing:0px;color:#f0f0f0;-webkit-text-stroke:0.55px #f0f0f0;transform:scaleX(0.8472);">5</div>
<div class="t" style="left:1287.80px;top:206.74px;line-height:25px;font-size:19.5px;font-weight:normal;font-style:normal;letter-spacing:0px;color:#f0f0f0;-webkit-text-stroke:0.55px #f0f0f0;transform:scaleX(0.8472);">6</div>
<div class="t" style="left:1365.55px;top:206.74px;line-height:25px;font-size:19.5px;font-weight:normal;font-style:normal;letter-spacing:0px;color:#f0f0f0;-webkit-text-stroke:0.55px #f0f0f0;transform:scaleX(0.8472);">7</div>
<div class="t" style="left:1443.30px;top:206.74px;line-height:25px;font-size:19.5px;font-weight:normal;font-style:normal;letter-spacing:0px;color:#f0f0f0;-webkit-text-stroke:0.55px #f0f0f0;transform:scaleX(0.8472);">8</div>
<div class="t" style="left:1521.05px;top:206.74px;line-height:25px;font-size:19.5px;font-weight:normal;font-style:normal;letter-spacing:0px;color:#f0f0f0;-webkit-text-stroke:0.55px #f0f0f0;transform:scaleX(0.8472);">9</div>
<div class="t" style="left:1592.45px;top:206.74px;line-height:25px;font-size:19.5px;font-weight:normal;font-style:normal;letter-spacing:0px;color:#f0f0f0;-webkit-text-stroke:0.55px #f0f0f0;transform:scaleX(0.9169);">10</div>
<div class="t" style="left:1670.20px;top:206.74px;line-height:25px;font-size:19.5px;font-weight:normal;font-style:normal;letter-spacing:0px;color:#f0f0f0;-webkit-text-stroke:0.55px #f0f0f0;transform:scaleX(0.9827);">11</div>
<div class="t" style="left:1747.95px;top:206.74px;line-height:25px;font-size:19.5px;font-weight:normal;font-style:normal;letter-spacing:0px;color:#f0f0f0;-webkit-text-stroke:0.55px #f0f0f0;transform:scaleX(0.9169);">12</div>
<div class="t" style="left:1825.70px;top:206.74px;line-height:25px;font-size:19.5px;font-weight:normal;font-style:normal;letter-spacing:0px;color:#f0f0f0;-webkit-text-stroke:0.55px #f0f0f0;transform:scaleX(0.9169);">13</div>
<div class="t" style="left:1903.45px;top:206.74px;line-height:25px;font-size:19.5px;font-weight:normal;font-style:normal;letter-spacing:0px;color:#f0f0f0;-webkit-text-stroke:0.55px #f0f0f0;transform:scaleX(0.9169);">14</div>
<div class="t" style="left:1981.20px;top:206.74px;line-height:25px;font-size:19.5px;font-weight:normal;font-style:normal;letter-spacing:0px;color:#f0f0f0;-webkit-text-stroke:0.55px #f0f0f0;transform:scaleX(0.9169);">15</div>
<div class="t" style="left:2058.95px;top:206.74px;line-height:25px;font-size:19.5px;font-weight:normal;font-style:normal;letter-spacing:0px;color:#f0f0f0;-webkit-text-stroke:0.55px #f0f0f0;transform:scaleX(0.9169);">16</div>
<div class="t" style="left:2136.70px;top:206.74px;line-height:25px;font-size:19.5px;font-weight:normal;font-style:normal;letter-spacing:0px;color:#f0f0f0;-webkit-text-stroke:0.55px #f0f0f0;transform:scaleX(0.9169);">17</div>
<div class="t" style="left:2214.45px;top:206.74px;line-height:25px;font-size:19.5px;font-weight:normal;font-style:normal;letter-spacing:0px;color:#f0f0f0;-webkit-text-stroke:0.55px #f0f0f0;transform:scaleX(0.9169);">18</div>
<div class="t" style="left:743.85px;top:206.74px;line-height:25px;font-size:19.5px;font-weight:normal;font-style:normal;letter-spacing:0px;color:#f0f0f0;-webkit-text-stroke:0.55px #f0f0f0;transform:scaleX(0.8472);">1</div>
<div class="t" style="left:666.10px;top:206.74px;line-height:25px;font-size:19.5px;font-weight:normal;font-style:normal;letter-spacing:0px;color:#f0f0f0;-webkit-text-stroke:0.55px #f0f0f0;transform:scaleX(0.8472);">2</div>
<div class="a" style="left:592.2px;top:208px;width:12px;height:30px;overflow:hidden"><div class="t" style="left:-4.6px;top:-0.7px;font-size:19.5px;line-height:25px;color:#ececec">3</div></div>
<div class="a" style="left:598px;top:251.5px;width:1681.5px;height:873px;background:#fff;border-right:1.5px dotted #b8b8b8"></div>
<div class="a" style="left:597px;top:251.5px;width:1px;height:873px;background:#5a5a5a"></div>
<div class="t" style="left:872.00px;top:273.45px;line-height:38px;font-size:29px;font-weight:normal;font-style:normal;letter-spacing:1.5px;color:#595959;transform:scaleX(0.8983);">Índice Cognitivo:</div>
<div class="t d" style="left:928.8px;top:333.24px;line-height:38px;font-size:29.6px;font-weight:normal;word-spacing:0.484px;transform:scaleX(1.0100);-webkit-text-stroke:0.35px #000;">Mide el rendimiento en tareas que requieren de observación analítica, reflexión, uso</div>
<div class="t d" style="left:832px;top:379.24px;line-height:38px;font-size:29.6px;font-weight:normal;word-spacing:1.420px;transform:scaleX(1.0100);-webkit-text-stroke:0.35px #000;">del pensamiento analógico y procesamiento de la información perceptiva. Se considera un</div>
<div class="t d" style="left:832px;top:425.74px;line-height:38px;font-size:29.6px;font-weight:normal;word-spacing:6.501px;transform:scaleX(1.0100);-webkit-text-stroke:0.35px #000;">indicador del razonamiento general del alumno. Perico obtiene un rendimiento en este</div>
<div class="t d" style="left:832px;top:472.99px;line-height:38px;font-size:29.6px;font-weight:normal;word-spacing:0.000px;transform:scaleX(0.9916);-webkit-text-stroke:0.35px #000;">índice de <b>-0.40</b> desviaciones estándar respecto a la media de su nivel escolar, lo que le ubica</div>
<div class="t" style="left:832.00px;top:519.74px;line-height:38px;font-size:29.6px;font-weight:normal;font-style:normal;letter-spacing:0px;color:#000;-webkit-text-stroke:0.35px #000;transform:scaleX(1.0084);">en la categoría Promedio.</div>
<div class="t d" style="left:928.8px;top:565.49px;line-height:38px;font-size:29.6px;font-weight:normal;word-spacing:3.024px;transform:scaleX(1.0100);-webkit-text-stroke:0.35px #000;">Las sub-pruebas específicas que fueron aplicadas para obtener este índice, y sus</div>
<div class="t" style="left:832.00px;top:611.74px;line-height:38px;font-size:29.6px;font-weight:normal;font-style:normal;letter-spacing:0px;color:#000;-webkit-text-stroke:0.35px #000;transform:scaleX(1.0119);">resultados, se observan en la siguiente tabla:</div>
<div class="t" style="left:931.25px;top:1053.24px;line-height:38px;font-size:29.6px;font-weight:normal;font-style:normal;letter-spacing:0px;color:#000;-webkit-text-stroke:0.3px #000;transform:scaleX(1.0194);">*Nota: El valor 0 representa la media de la población.</div>
<div class="a" style="left:831px;top:708px;width:1228px;height:58px;background:#e7f8f7"></div>
<div class="a" style="left:831px;top:766px;width:312px;height:282px;background:#e7f8f7"></div>
<div class="a" style="left:830px;top:707px;width:1230px;height:342px;border:2px solid #000"></div>
<div class="a" style="left:1142px;top:707px;width:2px;height:342px;background:#000"></div>
<div class="a" style="left:1864px;top:707px;width:2px;height:342px;background:#000"></div>
<div class="a" style="left:830px;top:765px;width:1230px;height:1.9px;background:#000"></div>
<div class="a" style="left:830px;top:871.2px;width:1230px;height:1.9px;background:#000"></div>
<div class="a" style="left:830px;top:942.4px;width:1230px;height:1.9px;background:#000"></div>
<div class="t" style="left:848.75px;top:719.17px;line-height:39px;font-size:29.8px;font-weight:bold;font-style:normal;letter-spacing:0px;color:#000;transform:scaleX(0.8230);">Sub-prueba</div>
<div class="t" style="left:1158.75px;top:719.17px;line-height:39px;font-size:29.8px;font-weight:bold;font-style:normal;letter-spacing:0px;color:#000;transform:scaleX(0.8208);">Descripción</div>
<div class="t" style="left:1880.75px;top:719.17px;line-height:39px;font-size:29.8px;font-weight:bold;font-style:normal;letter-spacing:0px;color:#000;transform:scaleX(0.8192);">Resultado*</div>
<div class="t" style="left:848.75px;top:800.17px;line-height:39px;font-size:29.8px;font-weight:normal;font-style:normal;letter-spacing:0px;color:#000;transform:scaleX(0.8163);">Reflexividad</div>
<div class="t" style="left:848.75px;top:888.92px;line-height:39px;font-size:29.8px;font-weight:normal;font-style:normal;letter-spacing:0px;color:#000;transform:scaleX(0.8308);">Pensamiento Analógico</div>
<div class="t" style="left:848.75px;top:978.17px;line-height:39px;font-size:29.8px;font-weight:normal;font-style:normal;letter-spacing:0px;color:#000;transform:scaleX(0.8263);">Organización Perceptiva</div>
<div class="t" style="left:1880.75px;top:782.67px;line-height:39px;font-size:29.8px;font-weight:bold;font-style:normal;letter-spacing:0px;color:#000;transform:scaleX(0.8143);">-0.30 D.E</div>
<div class="t" style="left:1880.75px;top:816.17px;line-height:39px;font-size:29.8px;font-weight:bold;font-style:normal;letter-spacing:0px;color:#000;transform:scaleX(0.8219);">(Promedio)</div>
<div class="t" style="left:1880.75px;top:870.17px;line-height:39px;font-size:29.8px;font-weight:bold;font-style:normal;letter-spacing:0px;color:#000;transform:scaleX(0.8128);">0.13 D.E</div>
<div class="t" style="left:1880.75px;top:906.17px;line-height:39px;font-size:29.8px;font-weight:bold;font-style:normal;letter-spacing:0px;color:#000;transform:scaleX(0.8219);">(Promedio)</div>
<div class="t" style="left:1880.75px;top:960.67px;line-height:39px;font-size:29.8px;font-weight:bold;font-style:normal;letter-spacing:0px;color:#000;transform:scaleX(0.8143);">-1.02 D.E</div>
<div class="t" style="left:1880.75px;top:995.17px;line-height:39px;font-size:29.8px;font-weight:bold;font-style:normal;letter-spacing:0px;color:#000;transform:scaleX(0.8238);">(Insuficiente)</div>
<div class="t d" style="left:1159px;top:764.67px;line-height:39px;font-size:29.8px;font-weight:normal;word-spacing:7.569px;transform:scaleX(0.8250);">Evalúa la capacidad del alumno de seguir instrucciones de</div>
<div class="t d" style="left:1159px;top:800.17px;line-height:39px;font-size:29.8px;font-weight:normal;word-spacing:13.421px;transform:scaleX(0.8250);">manera reflexiva, en específico el escuchar instrucciones</div>
<div class="t" style="left:1159.00px;top:835.17px;line-height:39px;font-size:29.8px;font-weight:normal;font-style:normal;letter-spacing:0px;color:#000;transform:scaleX(0.8277);">verbales e identificar su correspondencia gráfica.</div>
<div class="t d" style="left:1159px;top:870.92px;line-height:39px;font-size:29.8px;font-weight:normal;word-spacing:0.596px;transform:scaleX(0.8250);">Mide la capacidad para inferir relaciones verbales a partir de la</div>
<div class="t" style="left:1159.00px;top:906.42px;line-height:39px;font-size:29.8px;font-weight:normal;font-style:normal;letter-spacing:0px;color:#000;transform:scaleX(0.8249);">comparación de estímulos.</div>
<div class="t d" style="left:1159px;top:942.17px;line-height:39px;font-size:29.8px;font-weight:normal;word-spacing:10.359px;transform:scaleX(0.8250);">En esta prueba se evalúa la capacidad para, a partir de</div>
<div class="t d" style="left:1159px;top:978.17px;line-height:39px;font-size:29.8px;font-weight:normal;word-spacing:24.064px;transform:scaleX(0.8250);">estímulos visuales, completar figuras mentalmente sin</div>
<div class="t" style="left:1159.00px;top:1013.17px;line-height:39px;font-size:29.8px;font-weight:normal;font-style:normal;letter-spacing:0px;color:#000;transform:scaleX(0.8168);">manipularlas.</div>
</div>
</body></html>
